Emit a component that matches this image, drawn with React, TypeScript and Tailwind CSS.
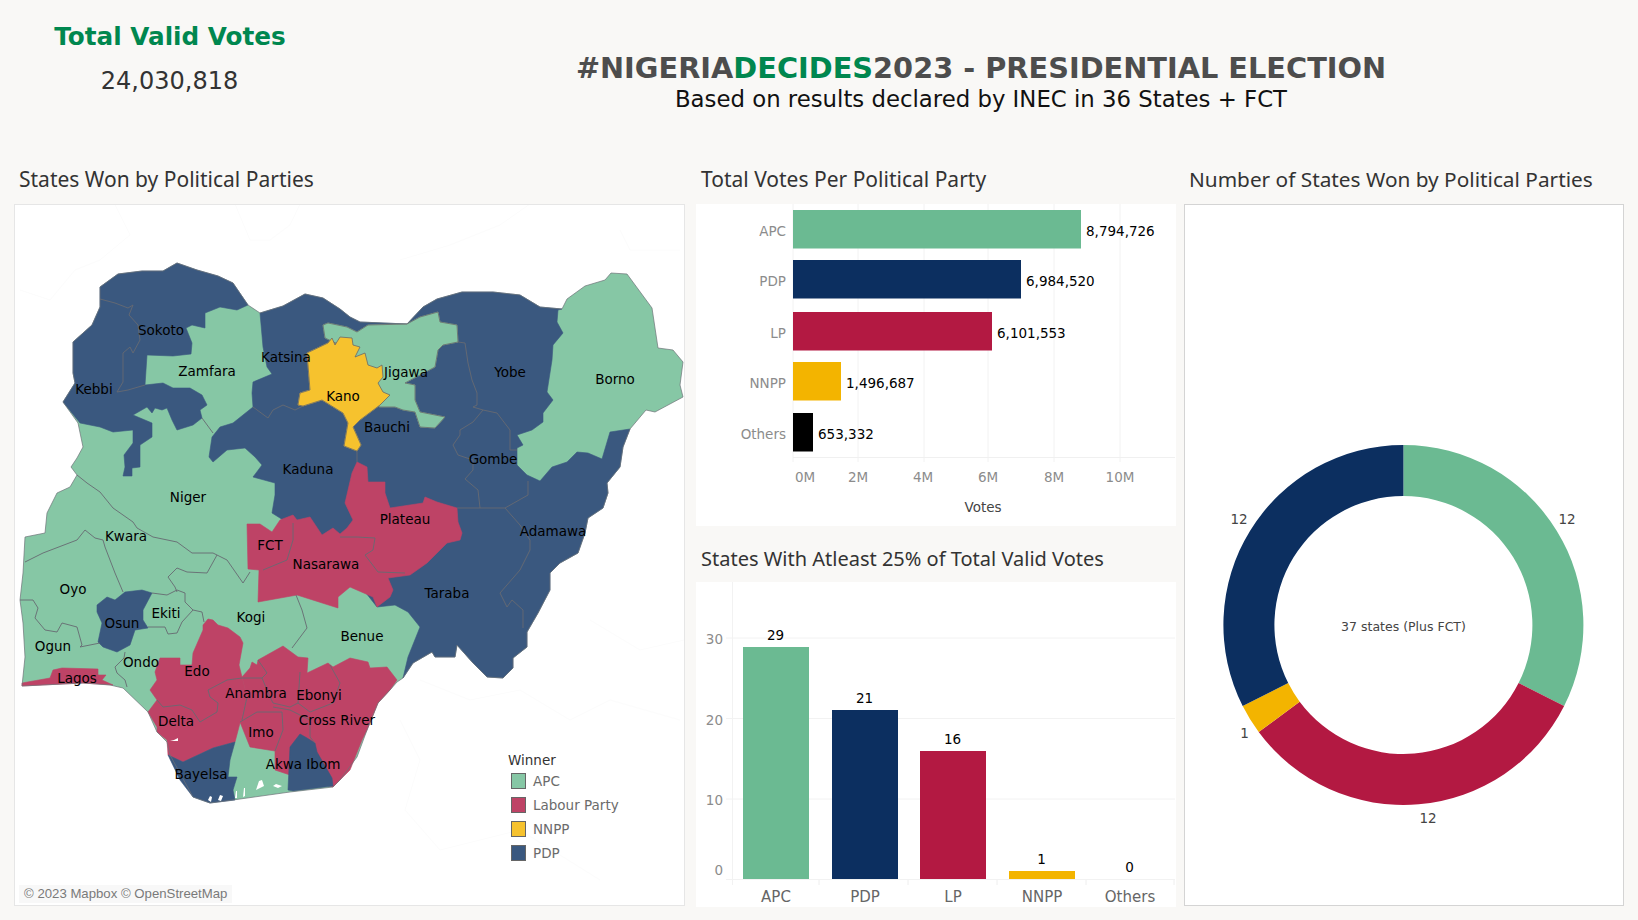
const APC = "#86c7a5";
const LP = "#be4366";
const NNPP = "#f6c22e";
const PDP = "#3a587f";

// all map coordinates are page pixels, the svg viewBox takes care of the offset
const outline =
  "100,287 118,274 142,271 163,271 177,263 197,270 218,276 233,283 248,305 260,313 283,306 305,294 323,298 340,309 350,317 360,322 407,324 423,307 437,299 462,292 493,292 520,295 540,307 562,309 567,299 585,286 605,280 611,273 627,274 652,308 658,348 673,350 683,362 680,385 683,397 655,412 646,410 630,429 623,447 620,467 607,483 608,493 603,508 588,518 585,533 578,553 560,563 550,573 550,590 538,613 527,632 527,647 513,658 513,668 503,678 487,677 473,663 457,645 455,657 435,657 432,652 413,663 403,678 397,682 390,690 378,703 367,730 357,757 340,780 333,787 290,792 233,800 210,803 193,797 170,755 167,742 157,732 148,712 123,688 110,685 83,683 22,686 25,657 23,623 20,600 23,573 25,537 45,533 47,513 57,493 70,487 77,475 71,467 77,458 83,447 78,423 63,402 75,383 73,373 73,342 92,325 100,307";

const regions: { fill: string; points: string }[] = [
  {
    fill: PDP,
    points:
      "100,287 118,274 142,271 163,271 177,263 197,270 218,276 233,283 248,305 237,310 220,307 205,313 205,328 192,325 186,328 192,343 191,354 173,356 147,355 145,385 163,383 173,388 190,388 202,395 207,405 200,410 202,418 193,425 177,430 172,420 167,408 162,410 155,408 152,413 147,407 133,415 152,423 152,437 140,445 140,467 132,468 132,476 123,476 125,467 124,455 133,443 133,430 113,432 100,427 80,423 63,402 75,383 73,373 73,342 92,325 100,307",
  },
  {
    fill: PDP,
    points:
      "260,313 283,306 305,294 323,298 340,309 350,317 360,322 407,324 423,307 437,299 462,292 493,292 520,295 540,307 562,309 558,310 557,322 563,333 553,345 552,360 547,392 553,400 543,413 543,422 532,430 517,435 523,445 517,448 517,465 527,475 540,481 552,467 567,462 577,452 588,453 602,459 610,432 630,429 623,447 620,467 607,483 608,493 603,508 588,518 585,533 578,553 560,563 550,573 550,590 538,613 527,632 527,647 513,658 513,668 503,678 487,677 473,663 457,645 455,657 435,657 432,652 413,663 403,678 408,657 420,627 408,612 395,605 377,607 340,560 280,518 272,513 275,495 275,483 253,477 262,465 255,457 245,448 227,450 213,462 209,457 212,437 220,427 233,423 253,407 252,393 253,382 272,374 267,367 263,347",
  },
  {
    fill: APC,
    points:
      "323,325 328,323 347,327 357,332 368,325 407,324 420,317 438,312 440,322 457,325 458,342 443,345 438,350 435,367 405,383 415,385 415,400 420,412 445,417 435,428 420,427 415,412 403,410 395,407 380,407 360,400 340,345 325,338",
  },
  {
    fill: NNPP,
    points:
      "307,353 328,343 332,338 335,345 340,337 352,338 353,345 360,347 355,357 365,353 368,365 377,368 382,365 383,377 378,383 383,392 390,395 380,405 360,420 353,427 361,445 357,451 344,446 348,423 343,413 322,400 303,406 298,405 300,393 310,390",
  },
  {
    fill: LP,
    points:
      "247,524 260,524 272,532 280,520 293,515 297,520 310,517 322,535 333,528 340,534 347,528 353,520 345,503 352,473 357,462 367,467 368,482 385,482 385,493 390,508 423,503 425,497 437,502 457,508 458,522 462,533 460,540 447,543 427,563 410,575 388,578 393,590 390,597 377,607 373,597 350,587 338,597 338,608 297,595 258,602 259,570 248,569",
  },
  {
    fill: PDP,
    points:
      "97,605 107,597 115,600 125,592 142,590 152,593 143,610 143,620 148,628 135,630 130,645 117,652 103,647 98,642 102,623 97,612",
  },
  {
    fill: LP,
    points: "22,683 50,678 53,670 62,668 98,669 98,675 106,675 102,680 113,685 83,683 22,686",
  },
  {
    fill: LP,
    points:
      "208,619 203,625 203,630 193,653 192,665 180,665 180,658 160,658 155,672 157,680 150,690 157,700 148,712 157,727 157,732 167,740 168,755 183,762 213,748 235,742 240,723 247,697 242,677 239,665 243,643 240,637 228,628 218,625 213,620",
  },
  {
    fill: LP,
    points:
      "242,677 250,668 252,662 257,665 258,660 283,646 298,657 308,658 307,673 328,663 333,667 350,658 368,662 370,668 387,667 397,680 390,690 378,703 367,730 362,740 350,770 340,780 333,787 290,775 275,770 275,751 250,747 240,722 247,697",
  },
  {
    fill: PDP,
    points: "300,734 290,747 288,790 293,791 333,786 332,778 317,752 315,743 307,738",
  },
  {
    fill: PDP,
    points:
      "168,755 183,762 213,748 235,742 230,760 228,777 237,777 233,790 235,800 210,803 193,797 180,780",
  },
];

const borders = [
  "100,299 115,303 128,308 133,305 129,315 138,325 140,340 133,353 130,347 123,353 123,382 117,392 128,390 145,385",
  "253,407 268,418 273,410 283,405 295,410 303,406",
  "202,418 213,433",
  "357,451 357,462",
  "458,342 465,343 468,363 472,380 477,393 477,405 473,407 483,410 497,413 510,430 510,450 517,450",
  "483,410 473,422 460,430 460,435 453,445 458,455 473,460 473,470 465,479 478,490 480,508 457,508",
  "480,508 505,508 528,495 528,481",
  "505,508 520,525 530,540 530,550 520,570 500,593 507,607 512,600 523,610 523,628",
  "77,475 87,483 100,492 113,508 133,522 137,528 153,537 177,542 192,553 213,553 227,560 243,583 250,572",
  "25,562 43,553 77,540 85,530 95,538 103,540 105,547 115,573 123,592",
  "217,555 207,573 187,572 177,568 168,577 175,587 177,592",
  "152,593 167,595 177,590 185,593 185,602 193,610 182,622 177,633 168,634 165,627 148,627",
  "193,610 202,612 204,622",
  "20,600 33,600 38,608 35,618 45,630 57,632 62,623 77,627 82,645 80,647 100,643",
  "125,652 124,658 115,667 117,673 125,680 127,687",
  "296,595 302,610 307,628 292,648",
  "293,523 293,540 287,560 263,570",
  "340,537 357,537 375,538 373,550 365,555 378,572 405,573",
  "157,700 163,707 180,705 192,710 200,722 217,712 218,703 210,697 208,690 227,680 242,678",
  "242,678 262,678 267,673 258,660",
  "262,678 270,697 273,703 290,707 298,703 300,672",
  "298,703 310,712 333,703 340,683 330,665",
  "240,722 257,712 282,712 283,730 275,751",
  "247,697 242,720",
  "273,707 290,710 310,720 310,737 315,743",
];

const creeks = [
  "208,800 210,796 212,797 211,802",
  "218,800 220,795 223,796 221,801",
  "235,798 236,791 237,791 237,798",
  "243,797 244,788 245,788 245,796",
  "256,790 259,781 262,780 264,786 260,788",
  "273,786 276,784 282,786 278,788",
  "170,741 174,740 178,738 178,741",
];

const faintLines = [
  "20,290 50,300 75,270 100,260 130,235 115,205",
  "235,204 250,240 270,240 290,225 300,204",
  "400,260 450,245 500,225 530,204",
  "620,230 630,250 680,250",
  "420,680 470,700 520,690 570,720 610,700 680,720",
  "400,720 420,760 405,810 440,850 520,830 600,880",
  "590,620 640,650 684,640",
];

const labels: [string, number, number][] = [
  ["Sokoto", 161, 330],
  ["Zamfara", 207, 371],
  ["Katsina", 286, 357],
  ["Kebbi", 94, 389],
  ["Kaduna", 308, 469],
  ["Niger", 188, 497],
  ["Kwara", 126, 536],
  ["Jigawa", 406, 372],
  ["Yobe", 510, 372],
  ["Borno", 615, 379],
  ["Kano", 343, 396],
  ["Bauchi", 387, 427],
  ["Gombe", 493, 459],
  ["Plateau", 405, 519],
  ["Adamawa", 553, 531],
  ["FCT", 270, 545],
  ["Nasarawa", 326, 564],
  ["Taraba", 447, 593],
  ["Oyo", 73, 589],
  ["Ekiti", 166, 613],
  ["Osun", 122, 623],
  ["Kogi", 251, 617],
  ["Benue", 362, 636],
  ["Ogun", 53, 646],
  ["Ondo", 141, 662],
  ["Edo", 197, 671],
  ["Lagos", 77, 678],
  ["Anambra", 256, 693],
  ["Ebonyi", 319, 695],
  ["Delta", 176, 721],
  ["Cross River", 337, 720],
  ["Imo", 261, 732],
  ["Akwa Ibom", 303, 764],
  ["Bayelsa", 201, 774],
];

const legend = [
  { name: "APC", color: APC },
  { name: "Labour Party", color: LP },
  { name: "NNPP", color: NNPP },
  { name: "PDP", color: PDP },
];

const votes = [
  { name: "APC", value: "8,794,726", y: 210, end: 1081, color: "#6bba92" },
  { name: "PDP", value: "6,984,520", y: 260, end: 1021, color: "#0c2f60" },
  { name: "LP", value: "6,101,553", y: 312, end: 992, color: "#b31942" },
  { name: "NNPP", value: "1,496,687", y: 362, end: 841, color: "#f3b400" },
  { name: "Others", value: "653,332", y: 413, end: 813, color: "#000000" },
];

const voteTicks = [
  { label: "0M", grid: 793, x: 805 },
  { label: "2M", grid: 858, x: 858 },
  { label: "4M", grid: 924, x: 923 },
  { label: "6M", grid: 988, x: 988 },
  { label: "8M", grid: 1054, x: 1054 },
  { label: "10M", grid: 1120, x: 1120 },
];

const columns = [
  { name: "APC", value: "29", x: 743, top: 647, color: "#6bba92" },
  { name: "PDP", value: "21", x: 832, top: 710, color: "#0c2f60" },
  { name: "LP", value: "16", x: 920, top: 751, color: "#b31942" },
  { name: "NNPP", value: "1", x: 1009, top: 871, color: "#f3b400" },
  { name: "Others", value: "0", x: 1097, top: 879, color: "#000000" },
];

function arc(cx: number, cy: number, R: number, r: number, from: number, to: number) {
  const pt = (rad: number, deg: number) => {
    const a = (deg * Math.PI) / 180;
    return `${(cx + rad * Math.sin(a)).toFixed(2)} ${(cy - rad * Math.cos(a)).toFixed(2)}`;
  };
  const large = to - from > 180 ? 1 : 0;
  return `M${pt(R, from)} A${R} ${R} 0 ${large} 1 ${pt(R, to)} L${pt(r, to)} A${r} ${r} 0 ${large} 0 ${pt(r, from)} Z`;
}

const donut = [
  { from: 0, to: 116.76, color: "#6bba92" },
  { from: 116.76, to: 233.51, color: "#b31942" },
  { from: 233.51, to: 243.24, color: "#f3b400" },
  { from: 243.24, to: 360, color: "#0c2f60" },
];

function NigeriaMap() {
  return (
    <div className="relative h-[702px] border border-[#e6e6e6] bg-white">
      <svg viewBox="15 205 669 700" className="block h-full w-full">
        {faintLines.map((p) => (
          <polyline key={p} points={p} fill="none" stroke="#fcfcfc" strokeWidth="1" />
        ))}
        <polygon points={outline} fill={APC} />
        {regions.map((r) => (
          <polygon key={r.points} points={r.points} fill={r.fill} stroke={r.fill} strokeWidth="0.6" strokeLinejoin="round" />
        ))}
        {borders.map((p) => (
          <polyline key={p} points={p} fill="none" stroke="#666a72" strokeWidth="0.9" strokeLinejoin="round" />
        ))}
        {regions.slice(2, 4).map((r) => (
          <polygon key={r.points} points={r.points} fill={r.fill} stroke="#6a6a6a" strokeWidth="0.8" strokeLinejoin="round" />
        ))}
        <polygon points={outline} fill="none" stroke="#6f7378" strokeWidth="0.7" strokeLinejoin="round" />
        {creeks.map((p) => (
          <polygon key={p} points={p} fill="#ffffff" />
        ))}
        {labels.map(([name, x, y]) => (
          <text key={name} x={x} y={y} textAnchor="middle" dominantBaseline="central" className="fill-black text-[13.5px]">
            {name}
          </text>
        ))}
      </svg>
      <div className="absolute left-[493px] top-[545px] text-[13.5px]">
        <div className="text-[#333333]">Winner</div>
        <div className="ml-[3px] mt-[-1px] flex flex-col">
          {legend.map((l) => (
            <div key={l.name} className="flex h-[24px] items-center gap-[7px] text-[#6b6b6b]">
              <span className="h-[16px] w-[15px] border border-[#666666]" style={{ backgroundColor: l.color }} />
              {l.name}
            </div>
          ))}
        </div>
      </div>
      <div className="absolute bottom-[2px] left-[4px] bg-[#f8f8f8] px-[5px] py-0 font-['Liberation_Sans',sans-serif] text-[13.2px] leading-[18px] text-[#7a7a7a]">
        © 2023 Mapbox © OpenStreetMap
      </div>
    </div>
  );
}

function VotesChart() {
  return (
    <svg viewBox="696 204 480 322" className="block h-[322px] w-[480px] bg-white">
      {voteTicks.map((t) => (
        <line key={t.label} x1={t.grid} x2={t.grid} y1={204} y2={462} stroke="#f2f2f2" />
      ))}
      <line x1={793} x2={1175} y1={457.5} y2={457.5} stroke="#f0f0f0" />
      {votes.map((v) => (
        <g key={v.name}>
          <rect x={793} y={v.y} width={v.end - 793} height={38.5} fill={v.color} />
          <text x={786} y={v.y + 21} textAnchor="end" dominantBaseline="central" className="fill-[#8c8c8c] text-[13.5px]">
            {v.name}
          </text>
          <text x={v.end + 5} y={v.y + 20.5} dominantBaseline="central" className="fill-black text-[13.5px]">
            {v.value}
          </text>
        </g>
      ))}
      {voteTicks.map((t) => (
        <text key={t.label} x={t.x} y={477} textAnchor="middle" dominantBaseline="central" className="fill-[#8c8c8c] text-[13.5px]">
          {t.label}
        </text>
      ))}
      <text x={983} y={507} textAnchor="middle" dominantBaseline="central" className="fill-[#444444] text-[13.5px]">
        Votes
      </text>
    </svg>
  );
}

function StatesChart() {
  return (
    <svg viewBox="696 582 480 325" className="block h-[325px] w-[480px] bg-white">
      {[638, 718.5, 799, 879.5].map((y) => (
        <line key={y} x1={726} x2={1175} y1={y} y2={y} stroke="#f2f2f2" />
      ))}
      <line x1={732.5} x2={732.5} y1={582} y2={885} stroke="#f2f2f2" />
      {[819, 908, 997, 1086, 1174].map((x) => (
        <line key={x} x1={x} x2={x} y1={880} y2={885} stroke="#eeeeee" />
      ))}
      {[
        ["30", 639],
        ["20", 720],
        ["10", 800],
        ["0", 870],
      ].map(([t, y]) => (
        <text key={t} x={723} y={y} textAnchor="end" dominantBaseline="central" className="fill-[#8c8c8c] text-[13.5px]">
          {t}
        </text>
      ))}
      {columns.map((c) => (
        <g key={c.name}>
          <rect x={c.x} y={c.top} width={66} height={879 - c.top} fill={c.color} />
          <text x={c.x + 32.5} y={c.top - 12} textAnchor="middle" dominantBaseline="central" className="fill-black text-[13.5px]">
            {c.value}
          </text>
          <text x={c.x + 33} y={897} textAnchor="middle" dominantBaseline="central" className="fill-[#666666] text-[15px]">
            {c.name}
          </text>
        </g>
      ))}
    </svg>
  );
}

function DonutChart() {
  return (
    <div className="h-[702px] border border-[#d4d4d4] bg-white">
      <svg viewBox="1185 205 438 700" className="block h-full w-full">
        {donut.map((d) => (
          <path key={d.color} d={arc(1403.4, 625, 180, 129, d.from, d.to)} fill={d.color} />
        ))}
        <text x={1403.5} y={626} textAnchor="middle" dominantBaseline="central" className="fill-[#444444] text-[12.5px]">
          37 states (Plus FCT)
        </text>
        {[
          ["a", "12", 1567, 519],
          ["b", "12", 1428, 818],
          ["c", "1", 1244.5, 733],
          ["d", "12", 1239, 519],
        ].map(([k, t, x, y]) => (
          <text key={k} x={x} y={y} textAnchor="middle" dominantBaseline="central" className="fill-[#444444] text-[13.5px]">
            {t}
          </text>
        ))}
      </svg>
    </div>
  );
}

export default function App() {
  return (
    <div className="h-[920px] w-[1638px] overflow-hidden bg-[#f9f8f6] font-['DejaVu_Sans',sans-serif]">
      <header className="flex h-[160px]">
        <div className="w-[340px] pt-[21px] text-center">
          <div className="text-[24.7px] font-bold leading-[32px] text-[#00874f]">Total Valid Votes</div>
          <div className="mt-[12px] pr-[1px] text-[24px] leading-[32px] text-[#333333]">24,030,818</div>
        </div>
        <div className="flex-1 pr-[16px] pt-[50px] text-center">
          <div className="text-[28.8px] font-bold leading-[37px] text-[#4d4d4d]">
            #NIGERIA<span className="text-[#00874f]">DECIDES</span>2023 - PRESIDENTIAL ELECTION
          </div>
          <div className="text-[22.8px] leading-[24px] text-[#111111]">
            Based on results declared by INEC in 36 States + FCT
          </div>
        </div>
      </header>
      <main className="flex pl-[14px]">
        <section className="w-[671px]">
          <h2 className="flex h-[40px] items-center pb-[0px] pl-[5px] font-['Noto_Sans',sans-serif] text-[21px] text-[#333333] mb-[4px]">
            States Won by Political Parties
          </h2>
          <NigeriaMap />
        </section>
        <section className="ml-[11px] w-[480px]">
          <h2 className="mb-[4px] flex h-[40px] items-center pl-[5px] font-['Noto_Sans',sans-serif] text-[21px] text-[#333333]">
            Total Votes Per Political Party
          </h2>
          <VotesChart />
          <h2 className="flex h-[56px] items-center pl-[5px] pt-[10px] font-['Noto_Sans',sans-serif] text-[20px] text-[#333333]">
            States With Atleast 25% of Total Valid Votes
          </h2>
          <StatesChart />
        </section>
        <section className="ml-[8px] w-[440px]">
          <h2 className="mb-[4px] flex h-[40px] items-center pl-[5px] font-['Noto_Sans',sans-serif] text-[20.8px] text-[#333333]">
            Number of States Won by Political Parties
          </h2>
          <DonutChart />
        </section>
      </main>
    </div>
  );
}
